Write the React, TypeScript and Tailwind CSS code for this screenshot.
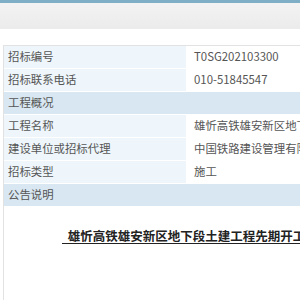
const rows: { label: string; value?: string; section?: boolean }[] = [
  { label: "招标编号", value: "T0SG202103300" },
  { label: "招标联系电话", value: "010-51845547" },
  { label: "工程概况", section: true },
  { label: "工程名称", value: "雄忻高铁雄安新区地下段土建工程先期开工" },
  { label: "建设单位或招标代理", value: "中国铁路建设管理有限公司" },
  { label: "招标类型", value: "施工" },
  { label: "公告说明", section: true },
];

export default function App() {
  return (
    <div
      className="h-[300px] w-[300px] overflow-hidden bg-white text-[11.4px] text-[#555]"
      style={{ fontFamily: '"Noto Sans CJK SC", "Noto Sans", sans-serif' }}
    >
      <div className="h-[3px] bg-[#7fafc6]" />
      <div className="h-[26px] bg-gradient-to-b from-[#f3f3f3] to-[#ebebeb]" />
      <div className="h-[16px]" />
      <div className="ml-[3px] h-[255px] border-l border-t border-[#e2e2e2]">
        {rows.map((r) =>
          r.section ? (
            <div key={r.label} className="flex h-[23px] items-center border-b border-white bg-[#d8e7f1] pl-[4px]">
              {r.label}
            </div>
          ) : (
            <div key={r.label} className="flex h-[23px] border-b border-white">
              <div className="flex w-[182px] shrink-0 items-center bg-[#eef5fb] pl-[4px]">{r.label}</div>
              <div className="flex min-w-0 items-center whitespace-nowrap pl-[8px]">{r.value}</div>
            </div>
          )
        )}
        <div className="mt-[20px] whitespace-nowrap pl-[58px] text-[12.5px] font-bold text-[#222] underline underline-offset-2">
          {"\u00a0 雄忻高铁雄安新区地下段土建工程先期开工招标公告"}
        </div>
      </div>
    </div>
  );
}
